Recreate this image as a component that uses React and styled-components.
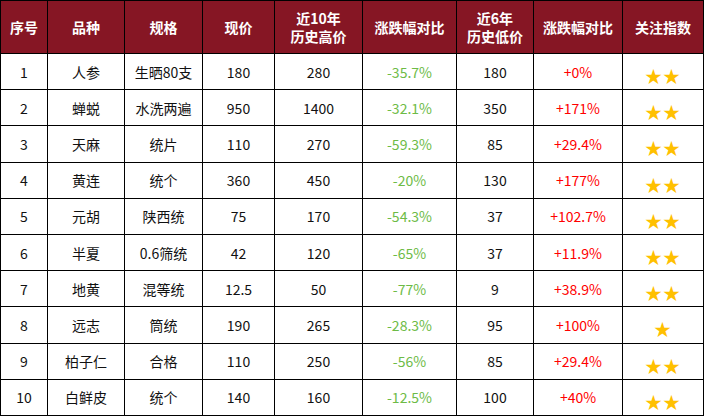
import React from 'react';
import styled, { createGlobalStyle } from 'styled-components';

const GlobalStyle = createGlobalStyle`
  html, body {
    margin: 0;
    padding: 0;
    background: #fff;
  }
  body {
    font-family: "Noto Sans CJK SC", "Noto Sans", sans-serif;
  }
`;

const Table = styled.table`
  width: 703px;
  border-collapse: collapse;
  table-layout: fixed;
  font-size: 14px;
  color: #111;
`;

const HeadCell = styled.th`
  background: #861624;
  color: #fff;
  font-weight: 700;
  font-size: 14px;
  line-height: 18px;
  height: 52px;
  padding: 0;
  border: 1.5px solid #000;
  text-align: center;
`;

const Cell = styled.td`
  height: 35.2px;
  padding: 0;
  border: 1.5px solid #000;
  text-align: center;
  color: ${props => props.tone === 'down' ? '#6dbb46' : props.tone === 'up' ? '#ff0000' : '#111'};
`;

const Stars = styled.span`
  color: #ffc000;
  font-size: 17px;
  letter-spacing: 1px;
  position: relative;
  top: 4px;
`;

const widths = [47, 77, 78, 72, 88, 94, 77, 89, 81];

const rows = [
  ['1', '人参', '生晒80支', '180', '280', '-35.7%', '180', '+0%', 2],
  ['2', '蝉蜕', '水洗两遍', '950', '1400', '-32.1%', '350', '+171%', 2],
  ['3', '天麻', '统片', '110', '270', '-59.3%', '85', '+29.4%', 2],
  ['4', '黄连', '统个', '360', '450', '-20%', '130', '+177%', 2],
  ['5', '元胡', '陕西统', '75', '170', '-54.3%', '37', '+102.7%', 2],
  ['6', '半夏', '0.6筛统', '42', '120', '-65%', '37', '+11.9%', 2],
  ['7', '地黄', '混等统', '12.5', '50', '-77%', '9', '+38.9%', 2],
  ['8', '远志', '筒统', '190', '265', '-28.3%', '95', '+100%', 1],
  ['9', '柏子仁', '合格', '110', '250', '-56%', '85', '+29.4%', 2],
  ['10', '白鲜皮', '统个', '140', '160', '-12.5%', '100', '+40%', 2],
];

const App = () => (
  <>
    <GlobalStyle />
    <Table>
      <colgroup>
        {widths.map((w, i) => <col key={i} style={{ width: w }} />)}
      </colgroup>
      <thead>
        <tr>
          <HeadCell>序号</HeadCell>
          <HeadCell>品种</HeadCell>
          <HeadCell>规格</HeadCell>
          <HeadCell>现价</HeadCell>
          <HeadCell>近10年<br />历史高价</HeadCell>
          <HeadCell>涨跌幅对比</HeadCell>
          <HeadCell>近6年<br />历史低价</HeadCell>
          <HeadCell>涨跌幅对比</HeadCell>
          <HeadCell>关注指数</HeadCell>
        </tr>
      </thead>
      <tbody>
        {rows.map(r => (
          <tr key={r[0]}>
            <Cell>{r[0]}</Cell>
            <Cell>{r[1]}</Cell>
            <Cell>{r[2]}</Cell>
            <Cell>{r[3]}</Cell>
            <Cell>{r[4]}</Cell>
            <Cell tone="down">{r[5]}</Cell>
            <Cell>{r[6]}</Cell>
            <Cell tone="up">{r[7]}</Cell>
            <Cell><Stars>{'★'.repeat(r[8])}</Stars></Cell>
          </tr>
        ))}
      </tbody>
    </Table>
  </>
);

export default App;
